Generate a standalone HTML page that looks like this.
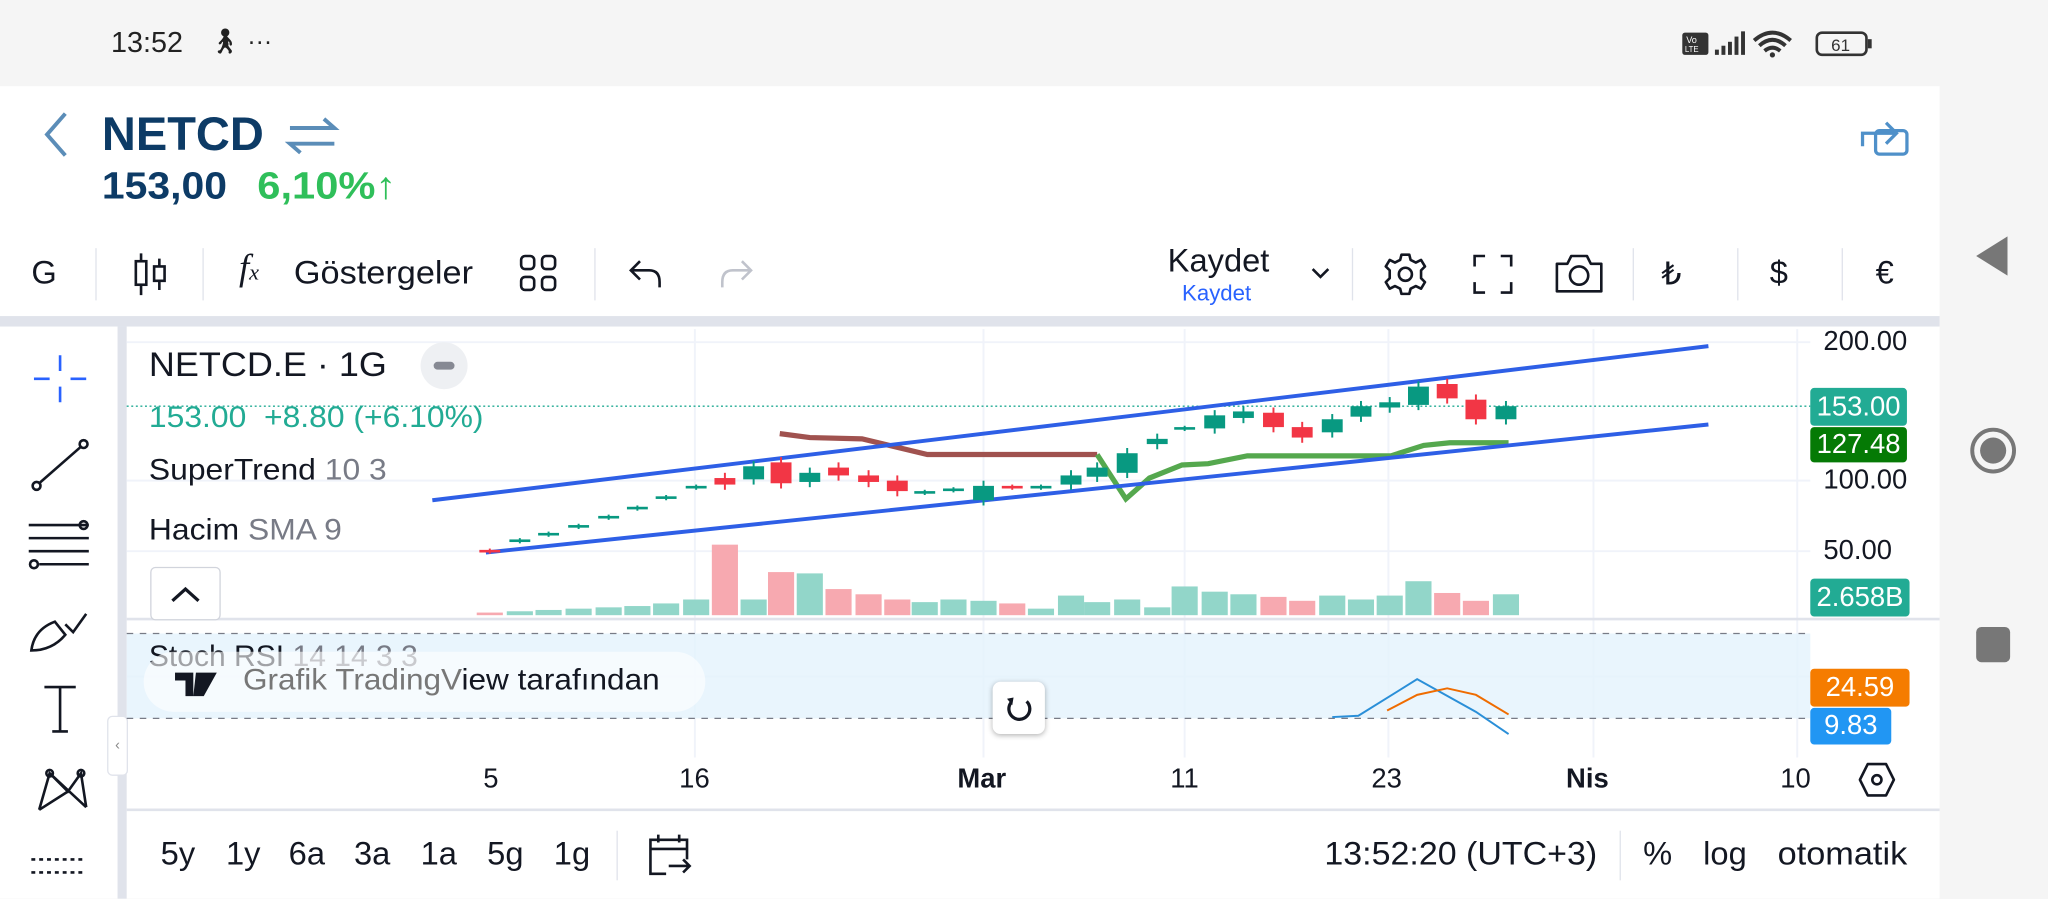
<!DOCTYPE html>
<html><head><meta charset="utf-8"><style>
html,body{margin:0;padding:0;width:2048px;height:899px;overflow:hidden;background:#f5f5f5}
#w{position:absolute;left:0;top:0;width:1568px;height:688px;transform:scale(1.306122);transform-origin:0 0;font-family:"Liberation Sans",sans-serif;color:#131722}
.a{position:absolute;white-space:nowrap}
</style></head><body><div id="w">
<div class="a" style="left:0;top:66px;width:1485px;height:622px;background:#fff"></div>
<div class="a" style="left:85px;top:20px;font-size:22px;color:#222">13:52</div>
<div class="a" style="left:160px;top:20px;font-size:19px;color:#222">🚶︎ ···</div>
<svg class="a" style="left:1285px;top:20px" width="160" height="28">
<rect x="3" y="5" width="20" height="17" rx="2" fill="#333"/><text x="6" y="13" font-size="7" fill="#fff" font-family="Liberation Sans">Vo</text><text x="5" y="20" font-size="6" fill="#fff" font-family="Liberation Sans">LTE</text>
<rect x="28" y="18" width="3" height="4" fill="#333"/><rect x="33" y="15" width="3" height="7" fill="#333"/><rect x="38" y="12" width="3" height="10" fill="#333"/><rect x="43" y="8" width="3" height="14" fill="#333"/><rect x="48" y="4" width="3" height="18" fill="#333"/>
<path d="M58 11 Q72 -1 86 11 M62 15 Q72 6 82 15 M66 19 Q72 14 78 19" stroke="#333" stroke-width="3" fill="none"/><circle cx="72" cy="22" r="2" fill="#333"/>
<rect x="106" y="5" width="38" height="17" rx="4" fill="none" stroke="#333" stroke-width="2"/><rect x="145" y="10" width="3" height="7" fill="#333"/><text x="117" y="19" font-size="13" fill="#333" font-family="Liberation Sans">61</text></svg>
<svg class="a" style="left:30px;top:84px" width="24" height="38"><path d="M20 3 L6 19 L20 35" stroke="#5b8db8" stroke-width="3" fill="none"/></svg>
<div class="a" style="left:78px;top:82px;font-size:36px;font-weight:bold;color:#0d3b66">NETCD</div>
<svg class="a" style="left:218px;top:88px" width="42" height="32"><path d="M4 10 H38 L30 3 M38 22 H4 L12 29" stroke="#5b8db8" stroke-width="3" fill="none"/></svg>
<div class="a" style="left:78px;top:127px;font-size:29px;font-weight:bold;color:#0d3b66;transform:scaleX(1.08);transform-origin:0 0">153,00</div>
<div class="a" style="left:197px;top:127px;font-size:29px;font-weight:bold;color:#2fbf5a;transform:scaleX(1.1);transform-origin:0 0">6,10%↑</div>
<svg class="a" style="left:1422px;top:82px" width="42" height="40"><path d="M4 30 V20 H30 M22 12 L30 20 L22 28" stroke="#4f90c9" stroke-width="2.5" fill="none"/><rect x="14" y="18" width="24" height="18" rx="3" stroke="#4f90c9" stroke-width="2.5" fill="none"/></svg>
<!-- toolbar -->
<div class="a" style="left:24px;top:195px;font-size:25px">G</div>
<div class="a" style="left:73px;top:190px;width:1px;height:40px;background:#e0e3eb"></div>
<svg class="a" style="left:100px;top:192px" width="32" height="36"><path d="M8 2 V34 M22 6 V30" stroke="#131722" stroke-width="2"/><rect x="4" y="8" width="8" height="18" fill="#fff" stroke="#131722" stroke-width="2"/><rect x="18" y="12" width="8" height="11" fill="#fff" stroke="#131722" stroke-width="2"/></svg>
<div class="a" style="left:155px;top:190px;width:1px;height:40px;background:#e0e3eb"></div>
<div class="a" style="left:183px;top:190px;font-size:28px;font-style:italic;font-family:'Liberation Serif',serif">f<span style="font-size:17px">x</span></div>
<div class="a" style="left:225px;top:195px;font-size:25px;transform:scaleX(1.05);transform-origin:0 0">Göstergeler</div>
<svg class="a" style="left:397px;top:194px" width="32" height="32"><g fill="none" stroke="#131722" stroke-width="2"><rect x="2" y="2" width="10" height="10" rx="3"/><rect x="18" y="2" width="10" height="10" rx="3"/><rect x="2" y="18" width="10" height="10" rx="3"/><rect x="18" y="18" width="10" height="10" rx="3"/></g></svg>
<div class="a" style="left:455px;top:190px;width:1px;height:40px;background:#e0e3eb"></div>
<svg class="a" style="left:480px;top:196px" width="30" height="28"><path d="M10 4 L3 11 L10 18 M3 11 H17 Q25 11 25 20 V24" stroke="#131722" stroke-width="2" fill="none"/></svg>
<svg class="a" style="left:548px;top:196px" width="30" height="28"><path d="M20 4 L27 11 L20 18 M27 11 H13 Q5 11 5 20 V24" stroke="#c0c3cc" stroke-width="2" fill="none"/></svg>
<div class="a" style="left:894px;top:186px;font-size:25px">Kaydet</div>
<div class="a" style="left:905px;top:215px;font-size:17px;color:#2962ff">Kaydet</div>
<svg class="a" style="left:1002px;top:202px" width="18" height="14"><path d="M3 4 L9 10 L15 4" stroke="#131722" stroke-width="2" fill="none"/></svg>
<div class="a" style="left:1035px;top:190px;width:1px;height:40px;background:#e0e3eb"></div>
<svg class="a" style="left:1058px;top:192px" width="36" height="36"><circle cx="18" cy="18" r="5" fill="none" stroke="#131722" stroke-width="2"/><path d="M15 3 H21 L22 7 L26 9 L30 7 L33 12 L30 15 V21 L33 24 L30 29 L26 27 L22 29 L21 33 H15 L14 29 L10 27 L6 29 L3 24 L6 21 V15 L3 12 L6 7 L10 9 L14 7 Z" fill="none" stroke="#131722" stroke-width="2" stroke-linejoin="round"/></svg>
<svg class="a" style="left:1127px;top:194px" width="32" height="32"><path d="M2 10 V2 H10 M22 2 H30 V10 M30 22 V30 H22 M10 30 H2 V22" stroke="#131722" stroke-width="2" fill="none"/></svg>
<svg class="a" style="left:1189px;top:192px" width="40" height="34"><path d="M3 10 H11 L14 4 H26 L29 10 H37 V31 H3 Z" fill="none" stroke="#131722" stroke-width="2" stroke-linejoin="round"/><circle cx="20" cy="19" r="7" fill="none" stroke="#131722" stroke-width="2"/></svg>
<div class="a" style="left:1250px;top:190px;width:1px;height:40px;background:#e0e3eb"></div>
<div class="a" style="left:1272px;top:196px;font-size:24px">₺</div>
<div class="a" style="left:1330px;top:190px;width:1px;height:40px;background:#e0e3eb"></div>
<div class="a" style="left:1355px;top:195px;font-size:25px">$</div>
<div class="a" style="left:1410px;top:190px;width:1px;height:40px;background:#e0e3eb"></div>
<div class="a" style="left:1436px;top:195px;font-size:25px">€</div>
<div class="a" style="left:0;top:242px;width:1485px;height:8px;background:#e0e3eb"></div>
<div class="a" style="left:90px;top:250px;width:7px;height:438px;background:#e0e3eb"></div>
<!-- right nav -->
<svg class="a" style="left:1510px;top:178px" width="30" height="36"><path d="M27 3 V33 L3 18 Z" fill="#777"/></svg>
<svg class="a" style="left:1506px;top:325px" width="40" height="40"><circle cx="20" cy="20" r="16" fill="none" stroke="#777" stroke-width="3"/><circle cx="20" cy="20" r="10" fill="#777"/></svg>
<div class="a" style="left:1513px;top:480px;width:26px;height:27px;border-radius:4px;background:#777"></div>
<!-- left tools -->
<svg class="a" style="left:0;top:250px" width="90" height="438" fill="none" stroke="#131722" stroke-width="2">
<path d="M46 22 V34 M46 46 V58 M26 40 H38 M54 40 H66" stroke="#2962ff"/>
<circle cx="28" cy="122" r="3"/><circle cx="64" cy="90" r="3"/><path d="M30 120 L62 92"/>
<path d="M22 152 H68 M22 162 H68 M22 172 H68 M30 182 H68"/><circle cx="26" cy="182" r="3"/><circle cx="64" cy="152" r="3"/>
<path d="M24 248 Q26 232 42 226 L50 236 Q40 248 24 248 Z M50 228 L56 234 L66 220"/>
<path d="M34 276 H58 M46 276 V310 M40 310 H52"/>
<path d="M30 370 L38 342 L52 356 L62 342 L66 368 M30 370 L52 356 M38 342 L66 368"/>
<circle cx="38" cy="342" r="2.5"/><circle cx="62" cy="342" r="2.5"/>
<path d="M24 408 H66 M24 418 H66" stroke-dasharray="3 3"/>
</svg>
<div class="a" style="left:82px;top:548px;width:14px;height:44px;border-radius:4px;background:#fff;border:1px solid #e0e3eb;font-size:11px;color:#888;text-align:center;line-height:44px">‹</div>
<!-- chart -->
<svg class="a" style="left:0;top:0" width="1568" height="688">
<g stroke="#f0f3fa" stroke-width="1.5">
<path d="M532 252 V580 M753 252 V580 M907 252 V580 M1063 252 V580 M1220 252 V580 M1376 252 V580"/>
<path d="M97 262 H1386 M97 368 H1386 M97 422 H1386 M97 518 H1386"/>
</g>
<rect x="97" y="485" width="1289" height="65" fill="#e3f2fd" opacity="0.8"/>
<path d="M97 485 H1386 M97 550 H1386" stroke="#787b86" stroke-dasharray="5 5" stroke-width="1"/>
<path d="M97 474 H1485 M97 620 H1485" stroke="#e0e3eb" stroke-width="2"/>
<path d="M97 311 H1386" stroke="#22ab94" stroke-dasharray="1.5 2" stroke-width="1"/>
<g id="vol"></g>
<path d="M597 332 L620 335 L660 336 L710 348 L840 348" stroke="#a0524f" stroke-width="4" fill="none"/>
<path d="M840 348 L862 382 L880 366 L905 356 L925 355 L955 349 L1065 349 L1090 341 L1110 339 L1155 339" stroke="#55a84e" stroke-width="4" fill="none"/>
<path d="M331 383 L1308 265 M372 423 L1308 325" stroke="#2e5fe6" stroke-width="3"/>
<g id="cdl"></g>
<path d="M1020 549 L1040 548 L1085 520 L1130 545 L1155 562" stroke="#2a8fd8" stroke-width="1.5" fill="none"/>
<path d="M1062 544 L1085 532 L1108 527 L1130 532 L1155 547" stroke="#ef6c00" stroke-width="1.5" fill="none"/>
</svg>
<script>
var C=[[375,421,423,0],[398,413,415,1],[420,408,410,1],[443,402,404,1],[466,395,397,1],[488,388,390,1],[510,380,382,1],[533,372,374,1],[555,366,371,0],[577,357,367,1],[598,354,370,0],[620,362,369,1],[642,358,364,0],[665,364,369,0],[687,368,376,0],[708,376,378,1],[730,374,376,1],[753,372,383,1],[775,372,374,0],[797,372,374,1],[820,364,371,1],[840,358,365,1],[863,347,362,1],[886,336,340,1],[907,327,329,1],[930,318,328,1],[952,315,320,1],[975,316,327,0],[997,327,335,0],[1020,321,331,1],[1042,311,319,1],[1064,308,312,1],[1086,296,310,1],[1108,294,305,0],[1130,306,321,0],[1153,311,321,1]];
var V=[2,3,4,5,6,7,9,12,54,12,33,32,20,16,12,10,12,11,9,5,15,10,12,6,22,18,16,14,11,15,12,15,26,17,11,16];
var s='',v='';
C.forEach(function(c,i){var col=c[3]?'#089981':'#f23645';var e=(c[2]-c[1]<4)?1:4;s+='<line x1="'+c[0]+'" x2="'+c[0]+'" y1="'+(c[1]-e)+'" y2="'+(c[2]+e)+'" stroke="'+col+'" stroke-width="1.5"/><rect x="'+(c[0]-8)+'" y="'+c[1]+'" width="16" height="'+Math.max(2,c[2]-c[1])+'" fill="'+col+'"/>';
var h=V[i];v+='<rect x="'+(c[0]-10)+'" y="'+(471-h)+'" width="20" height="'+h+'" fill="'+(c[3]?'#92d6c9':'#f7a9b0')+'"/>';});
document.getElementById('cdl').innerHTML=s;document.getElementById('vol').innerHTML=v;
</script>
<!-- legend -->
<div class="a" style="left:114px;top:264px;font-size:26px;transform:scaleX(1.06);transform-origin:0 0">NETCD.E · 1G</div>
<div class="a" style="left:322px;top:262px;width:36px;height:36px;border-radius:18px;background:#eef0f3"><div style="position:absolute;left:10px;top:15px;width:16px;height:6px;border-radius:3px;background:#868993"></div></div>
<div class="a" style="left:114px;top:306px;font-size:23px;color:#22ab94;transform:scaleX(1.06);transform-origin:0 0">153.00 &nbsp;+8.80 (+6.10%)</div>
<div class="a" style="left:114px;top:346px;font-size:23px;transform:scaleX(1.06);transform-origin:0 0">SuperTrend <span style="color:#787b86">10 3</span></div>
<div class="a" style="left:114px;top:392px;font-size:23px;transform:scaleX(1.06);transform-origin:0 0">Hacim <span style="color:#787b86">SMA 9</span></div>
<div class="a" style="left:115px;top:434px;width:52px;height:39px;border:1px solid #d1d4dc;border-radius:4px;background:#fff"><svg width="52" height="39"><path d="M16 25 L26 16 L36 25" stroke="#131722" stroke-width="2.5" fill="none"/></svg></div>
<div class="a" style="left:114px;top:489px;font-size:23px">Stoch RSI <span style="color:#787b86">14 14 3 3</span></div>
<div class="a" style="left:110px;top:499px;width:430px;height:46px;border-radius:23px;background:rgba(255,255,255,.6)"></div>
<svg class="a" style="left:122px;top:505px" width="48" height="34"><path d="M12 10 H26 V28 H20 V16 H12 Z M28 10 H44 L34 28 H26 Z" fill="#131722"/></svg>
<div class="a" style="left:186px;top:507px;font-size:23px;color:#131722;transform:scaleX(1.05);transform-origin:0 0"><span style="color:#777">Grafik TradingV</span>iew tarafından</div>
<div class="a" style="left:760px;top:522px;width:40px;height:40px;border-radius:6px;background:#fff;box-shadow:0 1px 4px rgba(0,0,0,.3)"><svg width="40" height="40"><path d="M26 15 A8 8 0 1 1 14 16" stroke="#131722" stroke-width="2.5" fill="none"/><path d="M11 13 L16 12 L15 18 Z" fill="#131722"/></svg></div>
<!-- price axis -->
<div class="a" style="left:1396px;top:250px;font-size:21px">200.00</div>
<div class="a" style="left:1396px;top:356px;font-size:21px">100.00</div>
<div class="a" style="left:1396px;top:410px;font-size:21px">50.00</div>
<div class="a" style="left:1386px;top:297px;width:74px;height:29px;background:#22ab94;border-radius:3px;color:#fff;font-size:21px;line-height:29px;text-align:center">153.00</div>
<div class="a" style="left:1386px;top:327px;width:74px;height:27px;background:#057a05;border-radius:3px;color:#fff;font-size:21px;line-height:27px;text-align:center">127.48</div>
<div class="a" style="left:1386px;top:443px;width:76px;height:29px;background:#22ab94;border-radius:3px;color:#fff;font-size:21px;line-height:29px;text-align:center">2.658B</div>
<div class="a" style="left:1386px;top:512px;width:76px;height:29px;background:#f57c00;border-radius:3px;color:#fff;font-size:21px;line-height:29px;text-align:center">24.59</div>
<div class="a" style="left:1386px;top:542px;width:62px;height:28px;background:#2196f3;border-radius:3px;color:#fff;font-size:21px;line-height:28px;text-align:center">9.83</div>
<!-- time axis -->
<div class="a" style="left:370px;top:585px;font-size:21px">5</div>
<div class="a" style="left:520px;top:585px;font-size:21px">16</div>
<div class="a" style="left:733px;top:585px;font-size:21px;font-weight:bold">Mar</div>
<div class="a" style="left:896px;top:585px;font-size:21px">11</div>
<div class="a" style="left:1050px;top:585px;font-size:21px">23</div>
<div class="a" style="left:1199px;top:585px;font-size:21px;font-weight:bold">Nis</div>
<div class="a" style="left:1363px;top:585px;font-size:21px">10</div>
<svg class="a" style="left:1422px;top:582px" width="30" height="30"><path d="M8 3 H22 L28 15 L22 27 H8 L2 15 Z" fill="none" stroke="#131722" stroke-width="2" stroke-linejoin="round"/><circle cx="15" cy="15" r="3.5" fill="none" stroke="#131722" stroke-width="2"/></svg>
<!-- bottom bar -->
<div class="a" style="left:123px;top:640px;font-size:25px">5y</div>
<div class="a" style="left:173px;top:640px;font-size:25px">1y</div>
<div class="a" style="left:221px;top:640px;font-size:25px">6a</div>
<div class="a" style="left:271px;top:640px;font-size:25px">3a</div>
<div class="a" style="left:322px;top:640px;font-size:25px">1a</div>
<div class="a" style="left:373px;top:640px;font-size:25px">5g</div>
<div class="a" style="left:424px;top:640px;font-size:25px">1g</div>
<div class="a" style="left:472px;top:636px;width:1px;height:38px;background:#e0e3eb"></div>
<svg class="a" style="left:494px;top:636px" width="38" height="36"><path d="M4 14 H32 M10 3 V9 M26 3 V9 M16 33 H4 V7 H32 V22" stroke="#131722" stroke-width="2" fill="none"/><path d="M18 27 H34 M29 22 L34 27 L29 32" stroke="#131722" stroke-width="2" fill="none"/></svg>
<div class="a" style="left:1014px;top:640px;font-size:25px;transform:scaleX(1.04);transform-origin:0 0">13:52:20 (UTC+3)</div>
<div class="a" style="left:1240px;top:636px;width:1px;height:38px;background:#e0e3eb"></div>
<div class="a" style="left:1258px;top:640px;font-size:25px">%</div>
<div class="a" style="left:1304px;top:640px;font-size:25px">log</div>
<div class="a" style="left:1361px;top:640px;font-size:25px;transform:scaleX(1.05);transform-origin:0 0">otomatik</div>
</div></body></html>
